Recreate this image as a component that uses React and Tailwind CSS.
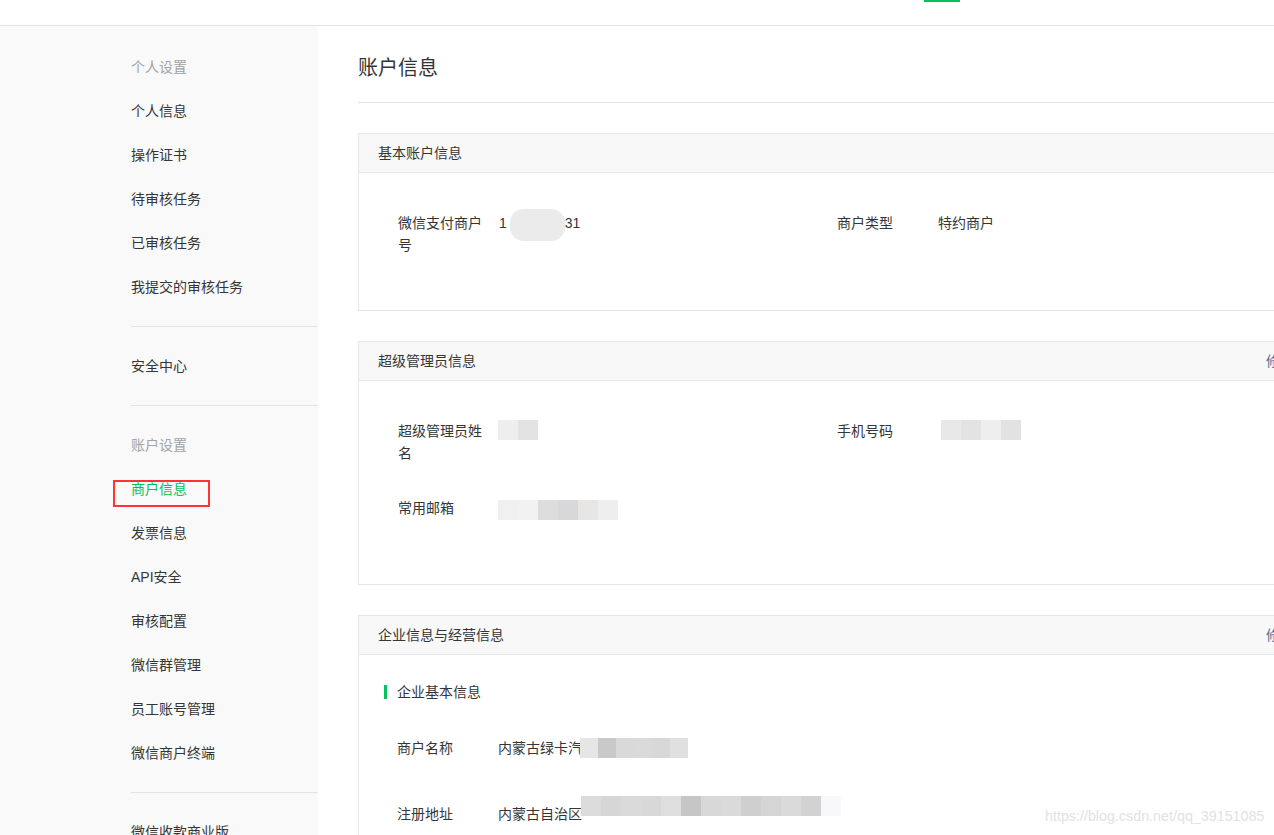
import React from "react";

const font = { fontFamily: '"Liberation Sans", "Noto Sans CJK SC", sans-serif' };

function SideItem({ children, muted, active, boxed }) {
  return (
    <div
      className={
        "relative h-[44px] flex items-center text-[14px] " +
        (muted ? "text-[#a3a3a3]" : active ? "text-[#07c160]" : "text-[#353535]")
      }
    >
      {children}
      {boxed && (
        <div className="absolute left-[-18px] top-[13px] w-[97px] h-[27px] border-2 border-[#ff3333]" />
      )}
    </div>
  );
}

function Divider() {
  return <div className="my-[17px] h-px bg-[#e3e3e3]" />;
}

function Panel({ title, edit, children, className }) {
  return (
    <div className={"border border-[#e7e7e7] bg-white " + (className || "")}>
      <div className="h-[39px] bg-[#f8f8f8] border-b border-[#e7e7e7] flex items-center justify-between pl-[19px] pr-[20px] text-[14px] text-[#353535]">
        <span>{title}</span>
        {edit && <span className="text-[#576b95]">修改</span>}
      </div>
      {children}
    </div>
  );
}

function Field({ label, children }) {
  return (
    <div className="flex w-[439px] text-[14px] leading-[22px] text-[#353535]">
      <div className="w-[88px] shrink-0">{label}</div>
      <div className="ml-[13px] flex items-start">{children}</div>
    </div>
  );
}

function Blob({ w, h, tones, className }) {
  return (
    <div className={"flex " + (className || "")} style={{ height: h }}>
      {tones.map((c, i) => (
        <div key={i} style={{ width: w, background: c }} />
      ))}
    </div>
  );
}

export default function App() {
  return (
    <div className="relative w-[1274px] h-[835px] overflow-hidden bg-white" style={font}>
      {/* top nav */}
      <div className="h-[26px] border-b border-[#e5e5ea] pl-[924px]">
        <div className="w-[36px] h-[2px] bg-[#07c160]" />
      </div>

      <div className="flex">
        {/* sidebar */}
        <div className="w-[318px] shrink-0 bg-[#f9f9f9] pl-[131px] pt-[19px] h-[809px]">
          <SideItem muted>个人设置</SideItem>
          <SideItem>个人信息</SideItem>
          <SideItem>操作证书</SideItem>
          <SideItem>待审核任务</SideItem>
          <SideItem>已审核任务</SideItem>
          <SideItem>我提交的审核任务</SideItem>
          <Divider />
          <SideItem>安全中心</SideItem>
          <Divider />
          <SideItem muted>账户设置</SideItem>
          <SideItem active boxed>商户信息</SideItem>
          <SideItem>发票信息</SideItem>
          <SideItem>API安全</SideItem>
          <SideItem>审核配置</SideItem>
          <SideItem>微信群管理</SideItem>
          <SideItem>员工账号管理</SideItem>
          <SideItem>微信商户终端</SideItem>
          <Divider />
          <SideItem>微信收款商业版</SideItem>
        </div>

        {/* main */}
        <div className="w-[997px] shrink-0 pl-[40px]">
          <div className="pt-[28px] text-[20px] leading-[28px] text-[#353535]">账户信息</div>
          <div className="mt-[20px] h-px bg-[#e5e5e5]" />

          <Panel title="基本账户信息" className="mt-[30px]">
            <div className="flex pl-[39px] pt-[39px] pb-[54px]">
              <Field label="微信支付商户号">
                <span>1</span>
                <div className="ml-[3px] -mt-[3px] w-[55px] h-[32px] rounded-[14px] bg-[#ebebeb]" />
                <span>31</span>
              </Field>
              <Field label="商户类型">特约商户</Field>
            </div>
          </Panel>

          <Panel title="超级管理员信息" edit className="mt-[30px]">
            <div className="pl-[39px] pt-[39px] pb-[64px]">
              <div className="flex">
                <Field label="超级管理员姓名">
                  <Blob w={20} h={20} tones={["#eeeeee", "#e3e3e3"]} className="-ml-[1px]" />
                </Field>
                <Field label="手机号码">
                  <Blob w={20} h={20} tones={["#e8e8e8", "#e3e3e3", "#eeeeee", "#e2e2e2"]} className="ml-[3px]" />
                </Field>
              </div>
              <div className="flex mt-[33px]">
                <Field label="常用邮箱">
                  <Blob
                    w={20}
                    h={20}
                    tones={["#f0f0f0", "#f2f2f2", "#dddddd", "#d8d8da", "#e8e6e5", "#eeeef0"]}
                    className="mt-[3px] -ml-[1px]"
                  />
                </Field>
              </div>
            </div>
          </Panel>

          <Panel title="企业信息与经营信息" edit className="mt-[30px]">
            <div className="pl-[25px] pt-[26px] pb-[60px]">
              <div className="flex items-center text-[14px] leading-[22px] text-[#353535]">
                <div className="w-[3px] h-[14px] bg-[#07c160]" />
                <span className="ml-[10px]">企业基本信息</span>
              </div>
              <div className="pl-[13px] mt-[34px]">
                <Field label="商户名称">
                  <span>内蒙古绿卡汽</span>
                  <Blob w={18} h={20} tones={["#e6e6e6", "#c9c9c9", "#d9d9d9", "#dadada", "#d8d8d8", "#e0e0e0"]} className="mt-[1px] -ml-[2px]" />
                </Field>
                <div className="mt-[44px]">
                  <Field label="注册地址">
                    <span className="whitespace-nowrap">内蒙古自治区</span>
                    <Blob
                      w={20}
                      h={20}
                      tones={[
                        "#dcdcdc", "#d6d6d6", "#dadada", "#d8d8d8", "#dedede", "#c6c6c6", "#d8d8d8",
                        "#dadada", "#cfcfcf", "#d5d5d5", "#dadada", "#d2d2d2", "#f8f8fa", "#ffffff"
                      ]}
                      className="mt-[-7px] -ml-[1px]"
                    />
                  </Field>
                </div>
              </div>
            </div>
          </Panel>
        </div>
      </div>

      {/* watermark */}
      <div className="absolute left-[1045px] top-[805px] text-[14.3px] leading-[22px] text-[#e2e2e2] whitespace-nowrap">
        https://blog.csdn.net/qq_39151085
      </div>
    </div>
  );
}
